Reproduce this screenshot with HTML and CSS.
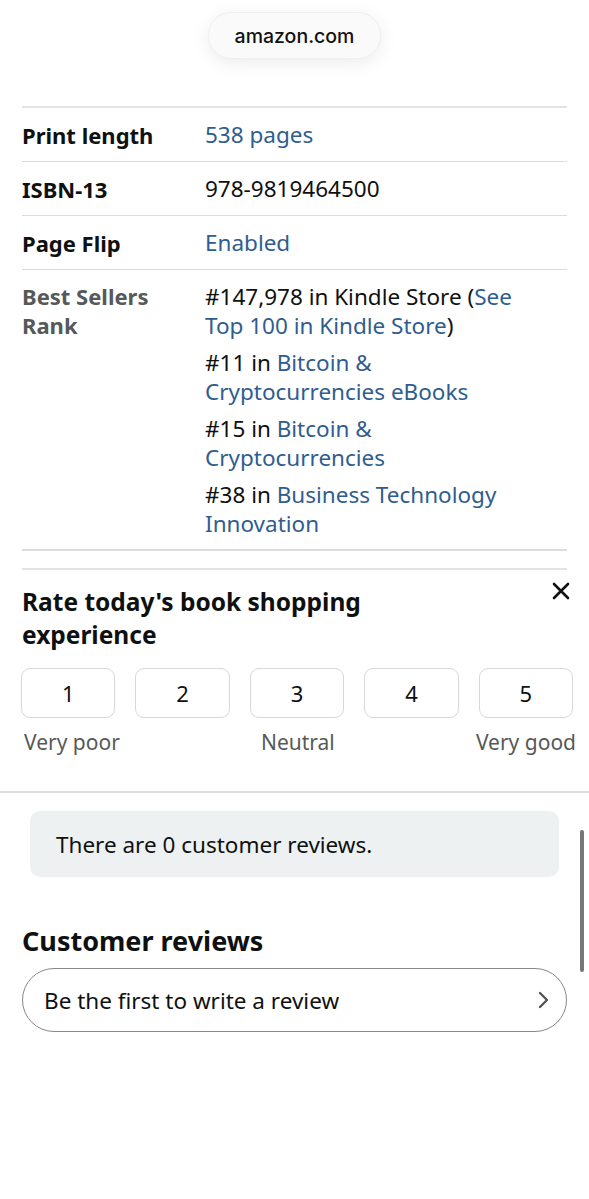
FILE: index.html
```html
<!DOCTYPE html>
<html lang="en">
    <head>
        <meta charset="UTF-8">
        <meta name="viewport" content="width=device-width, initial-scale=1.0">
        <title>Product details</title>
        <link rel="stylesheet" href="styles.css">
    </head>
    <body>
        <header class="url-bar">
            <div class="url-pill">amazon.com</div>
        </header>
        <main>
            <section class="details">
                <div class="detail-row">
                    <div class="detail-label">Print length</div>
                    <div class="detail-value link">538 pages</div>
                </div>
                <div class="detail-row">
                    <div class="detail-label">ISBN-13</div>
                    <div class="detail-value">978-9819464500</div>
                </div>
                <div class="detail-row">
                    <div class="detail-label">Page Flip</div>
                    <div class="detail-value link">Enabled</div>
                </div>
                <div class="detail-row rank-row">
                    <div class="detail-label muted">Best Sellers Rank</div>
                    <div class="detail-value">
                        <p>#147,978 in Kindle Store (<span class="link">See Top 100 in Kindle Store</span>)</p>
                        <p>#11 in <span class="link">Bitcoin &amp; Cryptocurrencies eBooks</span></p>
                        <p>#15 in <span class="link">Bitcoin &amp; Cryptocurrencies</span></p>
                        <p>#38 in <span class="link">Business Technology Innovation</span></p>
                    </div>
                </div>
            </section>
            <section class="survey">
                <div class="survey-head">
                    <h2>Rate today's book shopping experience</h2>
                    <button class="survey-close" aria-label="Close">
                        <svg width="20" height="20" viewBox="0 0 20 20"><path d="M3 3 L17 17 M17 3 L3 17" stroke="#111" stroke-width="2.6" stroke-linecap="round"/></svg>
                    </button>
                </div>
                <div class="survey-scale">
                    <button>1</button>
                    <button>2</button>
                    <button>3</button>
                    <button>4</button>
                    <button>5</button>
                </div>
                <div class="survey-labels">
                    <span>Very poor</span>
                    <span>Neutral</span>
                    <span>Very good</span>
                </div>
            </section>
            <section class="reviews">
                <div class="review-count">There are 0 customer reviews.</div>
                <h2>Customer reviews</h2>
                <a class="review-btn" href="#">
                    <span>Be the first to write a review</span>
                    <svg width="14" height="20" viewBox="0 0 14 20"><path d="M4 3 L11 10 L4 17" fill="none" stroke="#555" stroke-width="2.4" stroke-linecap="round" stroke-linejoin="round"/></svg>
                </a>
            </section>
        </main>
        <div class="scrollbar"></div>
    </body>
</html>
```

FILE: styles.css
```css
body
{
    margin: 0;
    background-color: #fff;
    font-family: "Noto Sans", sans-serif;
    color: #0f1111;
}
.url-bar
{
    display: flex;
    justify-content: center;
    padding-top: 12px;
    height: 106px;
    box-sizing: border-box;
}
.url-pill
{
    height: 45px;
    padding: 0 26px;
    display: flex;
    align-items: center;
    border-radius: 23px;
    background-color: #fafafa;
    border: 1px solid #f0f0f0;
    box-shadow: 0 4px 18px rgba(0, 0, 0, 0.08);
    font-family: Inter, sans-serif;
    font-size: 19.5px;
    font-weight: 500;
    color: #111;
}
main
{
    padding: 0 22px;
}
.details
{
    border-top: 2px solid #e3e3e3;
    border-bottom: 2px solid #e3e3e3;
}
.detail-row
{
    display: grid;
    grid-template-columns: 183px 330px;
    align-items: center;
    height: 53px;
    border-bottom: 1px solid #dcdcdc;
    font-size: 22.5px;
}
.detail-label
{
    font-size: 22px;
    font-weight: 700;
}
.detail-label.muted
{
    color: #565959;
    width: 140px;
    line-height: 29px;
}
.link
{
    color: #2f5d8f;
}
.rank-row
{
    height: auto;
    align-items: start;
    padding: 12px 0 11px;
    border-bottom: 2px solid #dcdcdc;
    margin-bottom: 17px;
    line-height: 29px;
}
.rank-row p
{
    margin: 0 0 8px;
}
.rank-row p:last-child
{
    margin-bottom: 0;
}
.survey
{
    padding: 15px 0 35px;
    margin-right: -6px;
}
.survey-head
{
    display: flex;
    justify-content: space-between;
    align-items: flex-start;
}
.survey h2
{
    margin: 0;
    width: 380px;
    font-size: 24.5px;
    line-height: 33px;
    font-weight: 700;
}
.survey-close
{
    border: none;
    background: none;
    padding: 0;
    margin: -4px 2px 0 0;
    cursor: pointer;
}
.survey-scale
{
    display: flex;
    gap: 20px;
    margin-top: 17px;
    margin-left: -1px;
}
.survey-scale button
{
    flex: 1;
    height: 50px;
    border: 1px solid #d8d8d8;
    border-radius: 9px;
    background-color: #fff;
    font-family: "Noto Sans", sans-serif;
    font-size: 22px;
    color: #0f1111;
}
.survey-labels
{
    display: flex;
    justify-content: space-between;
    margin-top: 10px;
    margin-right: -3px;
    padding-left: 2px;
    font-size: 21px;
    color: #565959;
}
.reviews
{
    margin: 0 -22px;
    padding: 18px 22px 0;
    border-top: 2px solid #dedede;
}
.review-count
{
    margin: 0 8px;
    height: 66px;
    display: flex;
    align-items: center;
    padding-left: 26px;
    border-radius: 10px;
    background-color: #eef1f2;
    font-size: 22.5px;
}
.reviews h2
{
    margin: 48px 0 11px;
    font-size: 27px;
    line-height: 32px;
    font-weight: 700;
}
.review-btn
{
    display: flex;
    justify-content: space-between;
    align-items: center;
    height: 62px;
    padding: 0 16px 0 21px;
    border: 1px solid #888;
    border-radius: 32px;
    color: #0f1111;
    text-decoration: none;
    font-size: 22.5px;
}
.scrollbar
{
    position: absolute;
    left: 580px;
    top: 830px;
    width: 4px;
    height: 142px;
    border-radius: 2px;
    background-color: #777;
}
```
